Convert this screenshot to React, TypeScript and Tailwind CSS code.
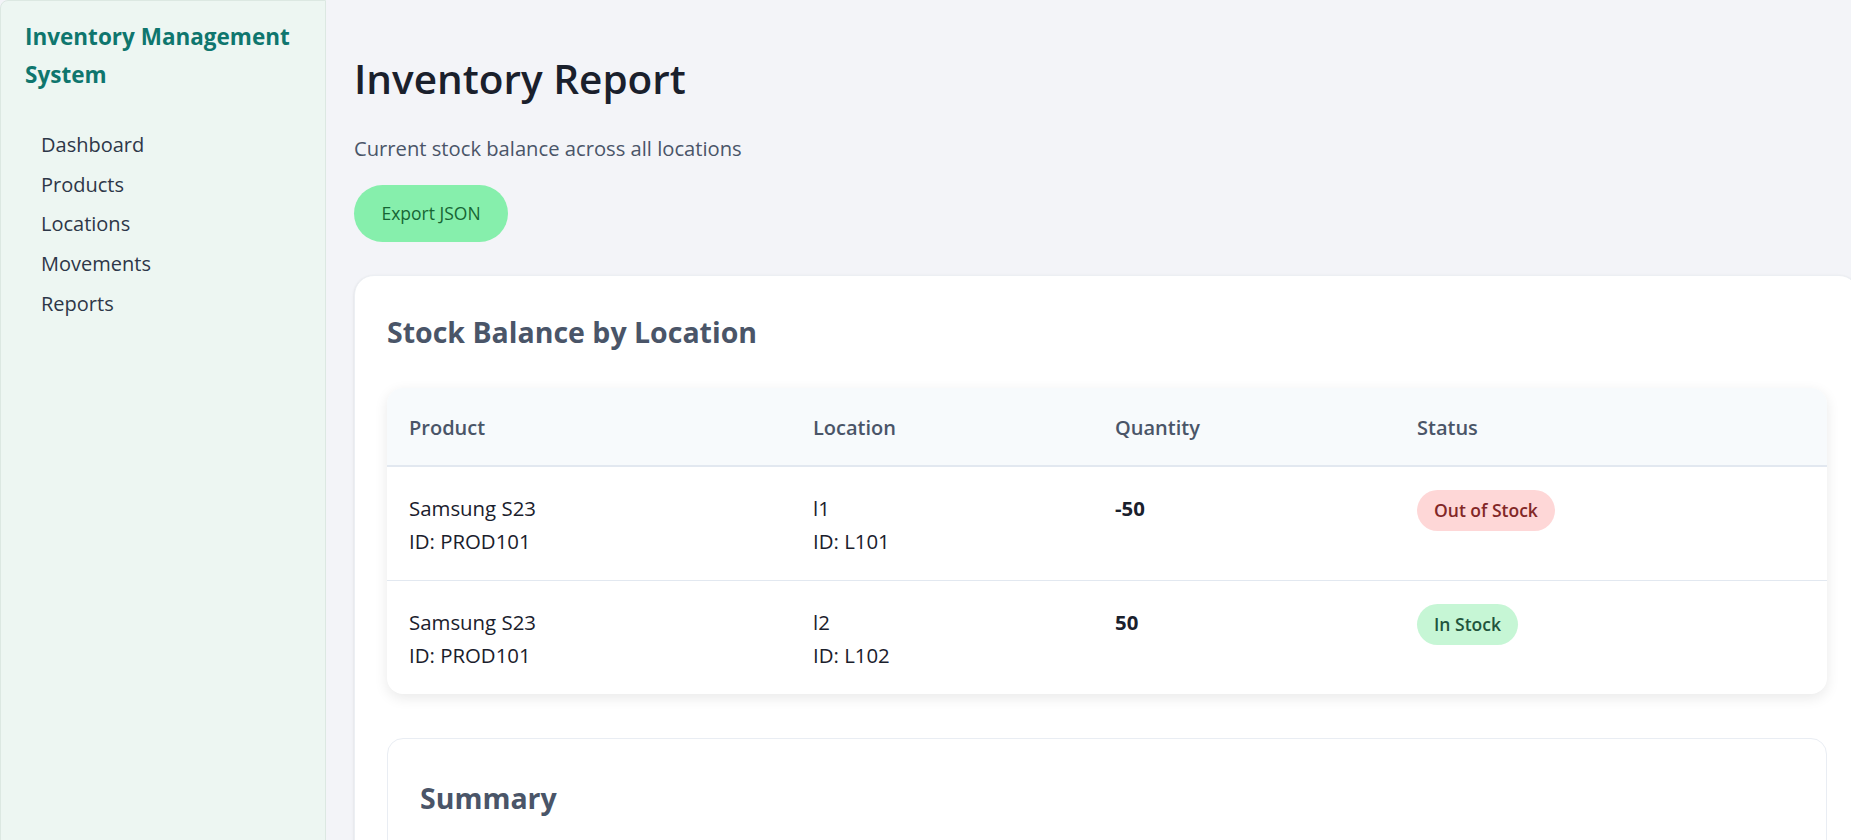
import React from "react";

interface StockRow {
  product: string;
  productId: string;
  location: string;
  locationId: string;
  quantity: number;
}

const rows: StockRow[] = [
  { product: "Samsung S23", productId: "PROD101", location: "l1", locationId: "L101", quantity: -50 },
  { product: "Samsung S23", productId: "PROD101", location: "l2", locationId: "L102", quantity: 50 },
];

const navItems = ["Dashboard", "Products", "Locations", "Movements", "Reports"];

function StatusBadge({ quantity }: { quantity: number }) {
  // anything at or below zero counts as out of stock
  if (quantity <= 0) {
    return (
      <span className="inline-flex h-[41px] items-center rounded-full bg-[#fed7d7] px-[17px] text-[17.5px] font-semibold text-[#822727]">
        Out of Stock
      </span>
    );
  }
  return (
    <span className="inline-flex h-[41px] items-center rounded-full bg-[#c6f6d5] px-[17px] text-[17.5px] font-semibold text-[#22543d]">
      In Stock
    </span>
  );
}

export default function App() {
  return (
    <div className="flex h-[840px] w-full overflow-hidden bg-[#f3f4f8] font-['Open_Sans','Noto_Sans',sans-serif]">
      {/* Sidebar */}
      <aside className="h-[860px] w-[326px] shrink-0 rounded-tl-[8px] border border-[#dce8e2] bg-[#edf6f2] pl-[24px] pr-[10px] pt-[17px]">
        <h2 className="text-[22.5px] font-bold leading-[38px] text-[#0f766e]">
          Inventory Management System
        </h2>
        <nav className="mt-[31px] flex flex-col pl-[16px]">
          {navItems.map((item) => (
            <a key={item} href="#" className="text-[20px] leading-[39.7px] text-[#2d3748]">
              {item}
            </a>
          ))}
        </nav>
      </aside>

      {/* Main content */}
      <main className="min-w-0 flex-1 pl-[28px] pt-[54px]">
        <h1 className="text-[40.5px] font-semibold leading-[50px] text-[#1a202c]">Inventory Report</h1>
        <p className="mt-[30px] text-[20.2px] leading-[28px] text-[#4a5568]">
          Current stock balance across all locations
        </p>
        <button className="mt-[23px] flex h-[57px] w-[154px] items-center justify-center rounded-full bg-[#86efac] text-[17.5px] text-[#166534]">
          Export JSON
        </button>

        <section className="mr-[-8px] mt-[33px] rounded-[20px] border border-[#eceff3] bg-white pb-[40px] pl-[32px] pr-[31px] pt-[38px] shadow-sm">
          <h2 className="text-[28.5px] font-bold leading-[36px] text-[#4a5568]">Stock Balance by Location</h2>

          <div className="mt-[38px] overflow-hidden rounded-[16px] bg-white shadow-[0_4px_14px_rgba(0,0,0,0.09)]">
            <div className="grid grid-cols-[404px_302px_302px_1fr] border-b-2 border-[#e2e8f0] bg-[#f7fafc] pb-[23px] pl-[22px] pt-[26px] text-[20px] font-semibold leading-[28px] text-[#4a5568]">
              <div>Product</div>
              <div>Location</div>
              <div>Quantity</div>
              <div>Status</div>
            </div>
            {rows.map((row, i) => (
              <div
                key={row.locationId}
                className={`grid grid-cols-[404px_302px_302px_1fr] items-start pb-[22px] pl-[22px] pt-[25px] text-[20.4px] leading-[33px] text-[#1a202c] ${
                  i < rows.length - 1 ? "border-b border-[#e2e8f0]" : ""
                }`}
              >
                <div>
                  <div>{row.product}</div>
                  <div>ID: {row.productId}</div>
                </div>
                <div>
                  <div>{row.location}</div>
                  <div>ID: {row.locationId}</div>
                </div>
                <div className="font-bold">{row.quantity}</div>
                <div className="mt-[-2px]">
                  <StatusBadge quantity={row.quantity} />
                </div>
              </div>
            ))}
          </div>

          <div className="mt-[44px] h-[200px] rounded-[16px] border border-[#e9edf3] bg-white pl-[32px] pt-[41px]">
            <h3 className="text-[28.5px] font-bold leading-[36px] text-[#4a5568]">Summary</h3>
          </div>
        </section>
      </main>
    </div>
  );
}
